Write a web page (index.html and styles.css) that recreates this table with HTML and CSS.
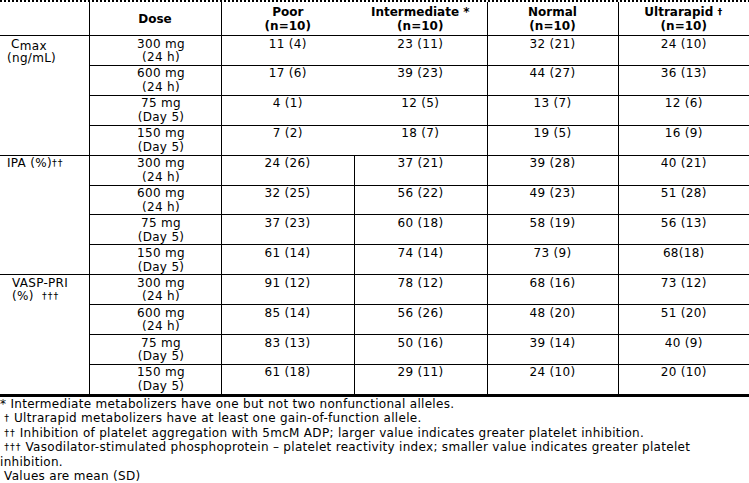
FILE: index.html
```html
<!DOCTYPE html>
<html lang="en">
<head>
<meta charset="utf-8">
<title>CYP2C19 metabolizer status</title>
<link rel="stylesheet" href="styles.css">
</head>
<body>
<div class="page">
  <div class="dash-rule"></div>
  <table class="pk">
    <colgroup>
      <col class="c-cat"><col class="c-dose"><col class="c-val"><col class="c-val"><col class="c-val2"><col class="c-val2">
    </colgroup>
    <thead>
      <tr>
        <th class="cat"></th>
        <th>Dose</th>
        <th class="open-r">Poor<br>(n=10)</th>
        <th class="open-l">Intermediate *<br>(n=10)</th>
        <th>Normal<br>(n=10)</th>
        <th class="last">Ultrarapid <span class="dag">†</span><br>(n=10)</th>
      </tr>
    </thead>
    <tbody>
      <tr>
        <td rowspan="4" class="cat">&nbsp;C<sub>max</sub><br>(ng/mL)</td>
        <td class="dose">300 mg<br>(24 h)</td>
        <td class="open-r">11 (4)</td><td class="open-l">23 (11)</td><td>32 (21)</td><td class="last">24 (10)</td>
      </tr>
      <tr>
        <td class="dose">600 mg<br>(24 h)</td>
        <td class="open-r">17 (6)</td><td class="open-l">39 (23)</td><td>44 (27)</td><td class="last">36 (13)</td>
      </tr>
      <tr>
        <td class="dose">75 mg<br>(Day 5)</td>
        <td class="open-r">4 (1)</td><td class="open-l">12 (5)</td><td>13 (7)</td><td class="last">12 (6)</td>
      </tr>
      <tr>
        <td class="dose">150 mg<br>(Day 5)</td>
        <td class="open-r">7 (2)</td><td class="open-l">18 (7)</td><td>19 (5)</td><td class="last">16 (9)</td>
      </tr>

      <tr>
        <td rowspan="4" class="cat">IPA (%)<span class="dag">††</span></td>
        <td class="dose">300 mg<br>(24 h)</td>
        <td>24 (26)</td><td>37 (21)</td><td>39 (28)</td><td class="last">40 (21)</td>
      </tr>
      <tr>
        <td class="dose">600 mg<br>(24 h)</td>
        <td>32 (25)</td><td>56 (22)</td><td>49 (23)</td><td class="last">51 (28)</td>
      </tr>
      <tr>
        <td class="dose">75 mg<br>(Day 5)</td>
        <td>37 (23)</td><td>60 (18)</td><td>58 (19)</td><td class="last">56 (13)</td>
      </tr>
      <tr>
        <td class="dose">150 mg<br>(Day 5)</td>
        <td>61 (14)</td><td>74 (14)</td><td>73 (9)</td><td class="last">68(18)</td>
      </tr>

      <tr>
        <td rowspan="4" class="cat cat-indent bottom">VASP-PRI<br>(%)&nbsp; <span class="dag">†††</span></td>
        <td class="dose">300 mg<br>(24 h)</td>
        <td>91 (12)</td><td>78 (12)</td><td>68 (16)</td><td class="last">73 (12)</td>
      </tr>
      <tr>
        <td class="dose">600 mg<br>(24 h)</td>
        <td>85 (14)</td><td>56 (26)</td><td>48 (20)</td><td class="last">51 (20)</td>
      </tr>
      <tr>
        <td class="dose">75 mg<br>(Day 5)</td>
        <td>83 (13)</td><td>50 (16)</td><td>39 (14)</td><td class="last">40 (9)</td>
      </tr>
      <tr class="bottom-row">
        <td class="dose">150 mg<br>(Day 5)</td>
        <td>61 (18)</td><td>29 (11)</td><td>24 (10)</td><td class="last">20 (10)</td>
      </tr>
    </tbody>
  </table>
  <div class="notes">
    <p>* Intermediate metabolizers have one but not two nonfunctional alleles.</p>
    <p>&nbsp;<span class="dag">†</span> Ultrarapid metabolizers have at least one gain-of-function allele.</p>
    <p>&nbsp;<span class="dag">††</span> Inhibition of platelet aggregation with 5mcM ADP; larger value indicates greater platelet inhibition.</p>
    <p>&nbsp;<span class="dag">†††</span> Vasodilator-stimulated phosphoprotein – platelet reactivity index; smaller value indicates greater platelet inhibition.</p>
    <p>&nbsp;Values are mean (SD)</p>
  </div>
</div>
</body>
</html>
```

FILE: styles.css
```css
* { box-sizing: border-box; }

html, body {
  margin: 0;
  padding: 0;
  background: #fff;
}

body {
  font-family: "DejaVu Sans", Verdana, sans-serif;
  font-size: 12px;
  letter-spacing: 0.3px;
  color: #000;
  overflow: hidden;
}

.page {
  width: 749px;
}

.dash-rule {
  height: 2px;
  background: repeating-linear-gradient(90deg, #000 0 2px, transparent 2px 4px);
}

.pk {
  width: 749px;
  border-collapse: collapse;
  table-layout: fixed;
  line-height: 13.7px;
}

.c-cat { width: 89px; }
.c-dose { width: 132px; }
.c-val { width: 133px; }
.c-val2 { width: 131px; }

.pk th,
.pk td {
  border: 1px solid #000;
  padding: 1.5px 0 0;
  text-align: center;
  vertical-align: top;
  font-weight: normal;
}

.pk th {
  font-weight: bold;
  letter-spacing: 0;
  vertical-align: middle;
  padding: 4px 0 1.6px;
  border-top: none;
}

.pk .cat {
  text-align: left;
  padding-left: 7px;
  border-left: none;
}

.pk .cat-indent {
  padding-left: 12px;
}

.pk .dose {
  padding-left: 12px;
}

.pk .last {
  border-right: none;
}

.pk .open-r {
  border-right-style: hidden;
}

.pk .open-l {
  border-left-style: hidden;
}

.pk sub {
  font-size: 12px;
  line-height: 1;
  vertical-align: -2px;
}

.dag {
  font-size: 9.5px;
  line-height: 1;
  vertical-align: 1.5px;
  letter-spacing: 1px;
}

.pk .bottom-row td,
.pk .bottom {
  border-bottom: 3px solid #000;
}

.notes {
  line-height: 14.5px;
}

.notes p {
  margin: 0;
}
```
